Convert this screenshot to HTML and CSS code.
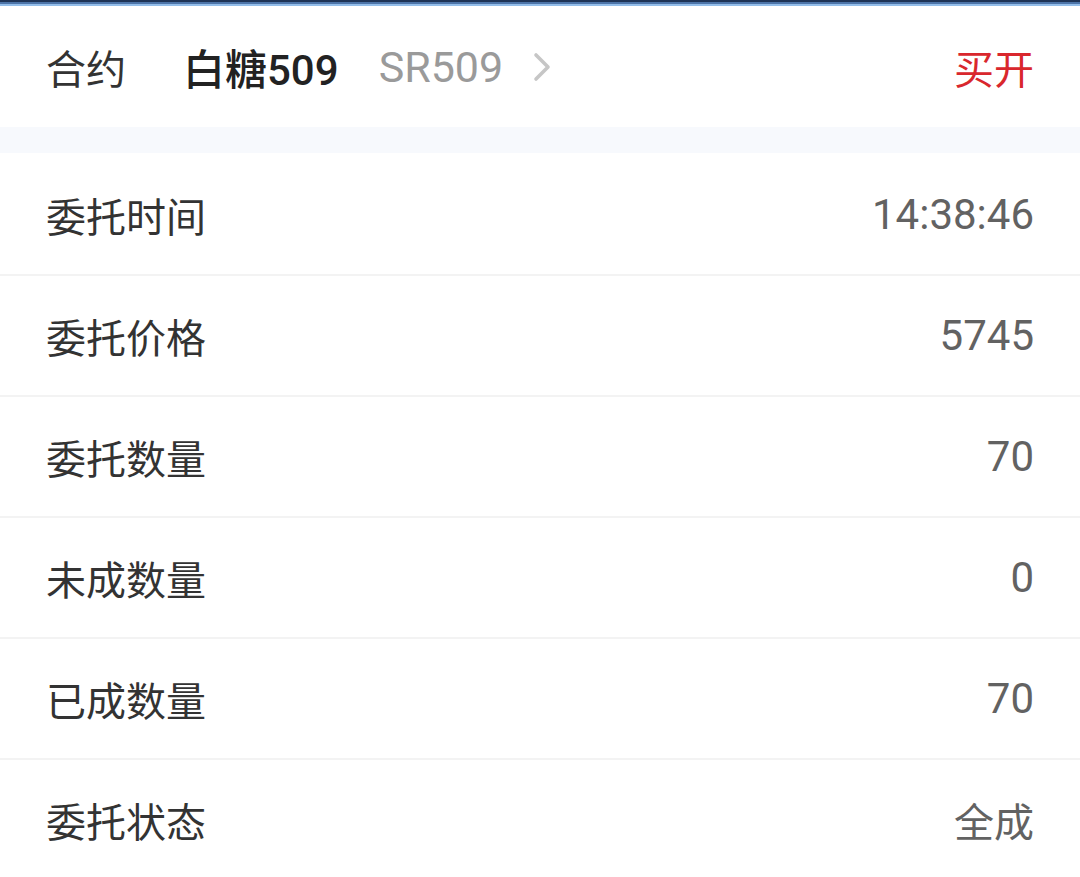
FILE: index.html
```html
<!DOCTYPE html>
<html lang="zh-CN">
<head>
    <meta charset="UTF-8">
    <meta name="viewport" content="width=device-width, initial-scale=1.0">
    <title>委托详情</title>
    <link rel="stylesheet" href="styles.css">
</head>
<body>
    <div class="top-strip"></div>
    <div class="contract">
        <div class="contract-left">
            <span class="contract-label">合约</span>
            <span class="contract-name">白糖509</span>
            <span class="contract-code">SR509</span>
            <svg class="chevron" width="20" height="30" viewBox="0 0 20 30">
                <path d="M4 3 L16 15 L4 27" fill="none" stroke="#c6c6c6" stroke-width="3.6" stroke-linecap="round" stroke-linejoin="round"/>
            </svg>
        </div>
        <span class="direction">买开</span>
    </div>
    <div class="gap"></div>
    <div class="detail-list">
        <div class="detail-row">
            <span class="detail-label">委托时间</span>
            <span class="detail-value num">14:38:46</span>
        </div>
        <div class="detail-row">
            <span class="detail-label">委托价格</span>
            <span class="detail-value num">5745</span>
        </div>
        <div class="detail-row">
            <span class="detail-label">委托数量</span>
            <span class="detail-value num">70</span>
        </div>
        <div class="detail-row">
            <span class="detail-label">未成数量</span>
            <span class="detail-value num">0</span>
        </div>
        <div class="detail-row">
            <span class="detail-label">已成数量</span>
            <span class="detail-value num">70</span>
        </div>
        <div class="detail-row">
            <span class="detail-label">委托状态</span>
            <span class="detail-value">全成</span>
        </div>
    </div>
</body>
</html>
```

FILE: styles.css
```css
body {
    margin: 0;
    background-color: #ffffff;
    font-family: Roboto, "Noto Sans CJK SC", sans-serif;
    font-size: 40px;
    color: #333333;
}
.top-strip {
    height: 6px;
    background: linear-gradient(to bottom, #1f3456 0, #1f3456 2px, #4d74a8 2px, #4d74a8 4px, #93bde9 4px, #93bde9 6px);
}
.contract {
    display: flex;
    justify-content: space-between;
    align-items: center;
    height: 121px;
    padding: 0 46px;
}
.contract-left {
    display: flex;
    align-items: center;
}
.contract-label {
    width: 137px;
    color: #333333;
}
.contract-name {
    color: #222222;
    font-weight: 500;
    font-size: 42px;
}
.contract-code {
    margin-left: 40px;
    color: #9a9a9a;
    font-size: 43px;
}
.chevron {
    margin-left: 29px;
}
.direction {
    color: #d9272d;
}
.gap {
    height: 26px;
    background-color: #f7f9fd;
}
.detail-list {
    padding-top: 2px;
}
.detail-row {
    display: flex;
    justify-content: space-between;
    align-items: center;
    height: 119px;
    padding: 0 46px;
    border-bottom: 2px solid #f3f3f3;
}
.detail-row:last-child {
    border-bottom: none;
}
.detail-label {
    color: #333333;
}
.detail-value {
    color: #626262;
}
.detail-value.num {
    font-size: 42px;
}
```
